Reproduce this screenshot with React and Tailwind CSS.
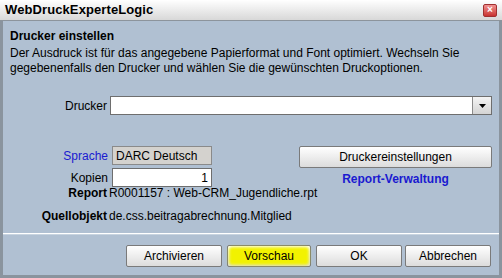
import React from 'react';

const Btn = ({ children, className = '', highlight }) => (
  <button
    className={`relative h-[22px] border border-[#7a7a7a] rounded-[2px] bg-gradient-to-b from-[#ffffff] to-[#dcdcdc] text-[12px] text-black leading-none ${className}`}
  >
    {highlight && (
      <span className="absolute inset-[1px] rounded-[3px] bg-[#f2f200] blur-[1.5px]" />
    )}
    <span className="relative">{children}</span>
  </button>
);

export default function App() {
  return (
    <div className="w-[502px] h-[278px] flex flex-col font-['Liberation_Sans',Arial,sans-serif] text-[12px] text-black select-none">
      {/* Title bar */}
      <div className="h-[21px] shrink-0 flex items-center justify-between pl-[5px] pr-[5px] bg-gradient-to-b from-[#ffffff] to-[#d8d8d8] border-b border-[#8c949c]">
        <span className="font-bold text-[13px] tracking-[0.1px]">WebDruckExperteLogic</span>
        <span className="w-[14px] h-[13px] rounded-[2px] border border-[#a03030] bg-gradient-to-b from-[#f09090] to-[#c83030] flex items-center justify-center text-white text-[10px] font-bold leading-none">
          ×
        </span>
      </div>

      {/* Body */}
      <div className="flex-1 flex flex-col bg-[#b0c0d2] border-x-[3px] border-b-[3px] border-[#8a949e]">
        <div className="pl-[7px] pr-[4px]">
          <div className="mt-[8px] font-bold leading-[15px]">Drucker einstellen</div>
          <div className="mt-[2px] leading-[15px]">
            Der Ausdruck ist für das angegebene Papierformat und Font optimiert. Wechseln Sie
            <br />
            gegebenenfalls den Drucker und wählen Sie die gewünschten Druckoptionen.
          </div>

          {/* Drucker combo */}
          <div className="mt-[20px] flex items-center">
            <span className="w-[97px] text-right">Drucker</span>
            <div className="ml-[3px] flex-1 h-[19px] flex bg-white border border-[#6e6e6e]">
              <div className="flex-1" />
              <div className="w-[19px] h-full bg-gradient-to-b from-[#f4f4f4] to-[#d4d4d4] border-l border-[#8a8a8a] flex items-center justify-center">
                <svg width="7" height="4" viewBox="0 0 7 4">
                  <path d="M0 0h7L3.5 4z" fill="#000" />
                </svg>
              </div>
            </div>
            <div className="w-[3px]" />
          </div>

          {/* Sprache / Kopien + right column */}
          <div className="mt-[31px] flex">
            <div className="flex flex-col gap-[3px]">
              <div className="flex items-center">
                <span className="w-[98px] text-right text-[#1a1ad0]">Sprache</span>
                <div className="ml-[4px] w-[100px] h-[19px] bg-[#d4d2ce] border border-[#8a8a8a] pl-[3px] flex items-center">
                  DARC Deutsch
                </div>
              </div>
              <div className="flex items-center">
                <span className="w-[98px] text-right">Kopien</span>
                <div className="ml-[4px] w-[100px] h-[19px] bg-white border border-[#6e6e6e] pr-[3px] flex items-center justify-end">
                  1
                </div>
              </div>
            </div>
            <div className="ml-[87px] w-[193px] flex flex-col items-center">
              <Btn className="w-full h-[20px]">Druckereinstellungen</Btn>
              <span className="mt-[5px] font-bold text-[#1a1ad0] leading-[12px]">Report-Verwaltung</span>
            </div>
          </div>

          <div className="flex leading-[12px]">
            <span className="w-[97px] text-right font-bold">Report</span>
            <span className="ml-[2px]">R0001157 : Web-CRM_Jugendliche.rpt</span>
          </div>
          <div className="mt-[11px] flex leading-[12px]">
            <span className="w-[97px] text-right font-bold">Quellobjekt</span>
            <span className="ml-[2px]">de.css.beitragabrechnung.Mitglied</span>
          </div>
        </div>

        {/* Separator */}
        <div className="mt-[11px] h-[2px] border-t border-[#ffffff] border-b border-b-[#c8d4e0]" />

        {/* Buttons */}
        <div className="mt-[10px] flex justify-end pr-[8px]">
          <Btn className="w-[96px]">Archivieren</Btn>
          <Btn className="ml-[5px] w-[84px]" highlight>Vorschau</Btn>
          <Btn className="ml-[5px] w-[86px]">OK</Btn>
          <Btn className="ml-[3px] w-[86px]">Abbrechen</Btn>
        </div>
      </div>
    </div>
  );
}
